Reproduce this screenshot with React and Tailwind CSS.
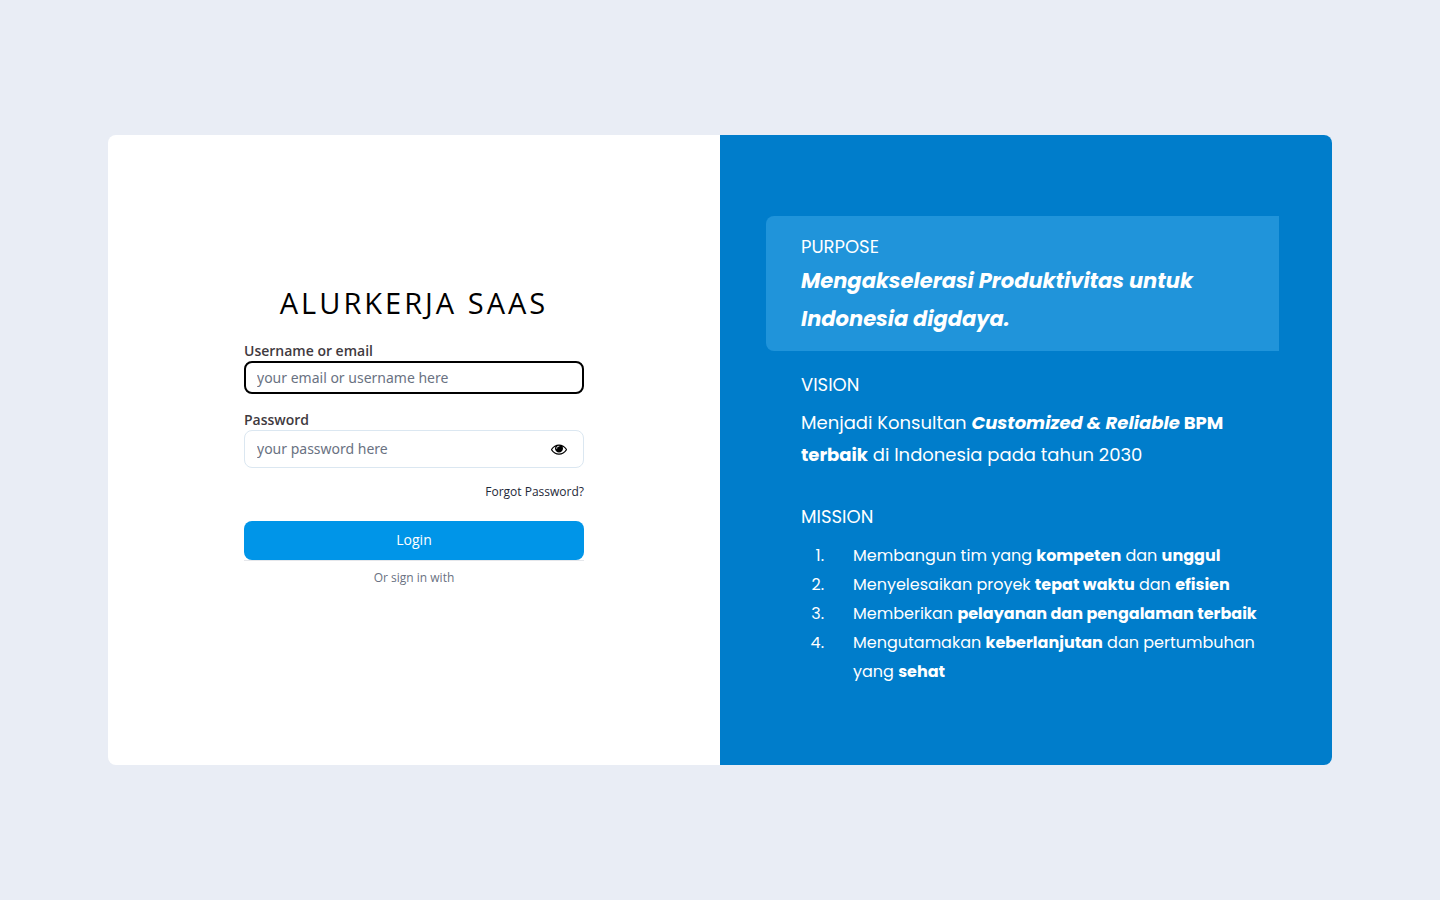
// src/pages/LoginPage.jsx

import React, { useState } from 'react';

function EyeIcon() {
  return (
    <svg viewBox="0 0 1792 1792" className="w-4 h-4" fill="currentColor" aria-hidden="true">
      <path d="M1664 960q-152-236-381-353 61 104 61 225 0 185-131.500 316.500t-316.500 131.500-316.500-131.500-131.500-316.500q0-121 61-225-229 117-381 353 133 205 333.500 326.500t434.500 121.500 434.500-121.500 333.500-326.500zm-720-384q0-20-14-34t-34-14q-125 0-214.500 89.500t-89.500 214.500q0 20 14 34t34 14 34-14 14-34q0-86 61-147t147-61q20 0 34-14t14-34zm848 384q0 34-20 69-140 230-376.500 368.500t-499.500 138.500-499.500-139-376.500-368q-20-35-20-69t20-69q140-229 376.500-368t499.500-139 499.500 139 376.500 368q20 35 20 69z" />
    </svg>
  );
}

const missions = [
  <>Membangun tim yang <b>kompeten</b> dan <b>unggul</b></>,
  <>Menyelesaikan proyek <b>tepat waktu</b> dan <b>efisien</b></>,
  <>Memberikan <b>pelayanan dan pengalaman terbaik</b></>,
  <>Mengutamakan <b>keberlanjutan</b> dan pertumbuhan<br />yang <b>sehat</b></>,
];

function LoginForm() {
  const [username, setUsername] = useState('');
  const [password, setPassword] = useState('');
  const [showPassword, setShowPassword] = useState(false);

  return (
    <form
      onSubmit={e => e.preventDefault()}
      className="w-full max-w-[340px] pb-[30px] flex flex-col text-sm"
    >
      <h1 className="mb-5 text-[29px] leading-9 text-center tracking-[3px] text-black">
        ALURKERJA SAAS
      </h1>
      <label htmlFor="username" className="font-semibold text-[#3f3a40]">
        Username or email
      </label>
      <input
        id="username"
        placeholder="your email or username here"
        value={username}
        onChange={e => setUsername(e.target.value)}
        className="w-full h-[33px] mb-4 px-[11px] border-2 border-black rounded-lg outline-none font-['Noto_Sans',sans-serif] placeholder:text-gray-500"
      />
      <label htmlFor="password" className="font-semibold text-[#3f3a40]">
        Password
      </label>
      <div className="flex items-center h-[38px] pl-3 pr-4 border border-[#dbe7f1] rounded-lg">
        <input
          id="password"
          type={showPassword ? 'text' : 'password'}
          placeholder="your password here"
          value={password}
          onChange={e => setPassword(e.target.value)}
          className="flex-1 min-w-0 outline-none font-['Noto_Sans',sans-serif] placeholder:text-gray-500"
        />
        <button
          type="button"
          aria-label="Show password"
          onClick={() => setShowPassword(!showPassword)}
          className="text-black"
        >
          <EyeIcon />
        </button>
      </div>
      <a href="#forgot" className="self-end mt-4 text-xs text-gray-800">
        Forgot Password?
      </a>
      <button type="submit" className="mt-[21px] h-[39px] rounded-lg bg-[#0095e8] text-white">
        Login
      </button>
      <p className="pt-[9px] border-t border-gray-200 text-xs text-center text-gray-500">
        Or sign in with
      </p>
    </form>
  );
}

export default function App() {
  return (
    <div className="min-h-screen flex items-center justify-center bg-[#e9edf5] font-['Open_Sans',sans-serif]">
      <main className="w-[85%] min-h-[70vh] grid grid-cols-2 rounded-lg overflow-hidden bg-white">
        <div className="flex items-center justify-center">
          <LoginForm />
        </div>
        <div className="flex flex-col justify-center pt-0.5 pl-[46px] pr-[53px] bg-[#007dcb] text-white font-[Poppins,Inter,sans-serif]">
          <section className="pl-[35px] pt-[17px] pb-[13px] rounded-l-lg bg-[#2094da]">
            <h2 className="mb-px text-lg">PURPOSE</h2>
            <p className="text-[21px] leading-[38px] font-bold italic">
              Mengakselerasi Produktivitas untuk
              <br />
              Indonesia digdaya.
            </p>
          </section>
          <section className="pl-[35px] mt-5">
            <h2 className="text-lg">VISION</h2>
            <p className="mt-2 text-lg leading-8">
              Menjadi Konsultan <b><i>Customized &amp; Reliable</i> BPM</b>
              <br />
              <b>terbaik</b> di Indonesia pada tahun 2030
            </p>
          </section>
          <section className="pl-[35px] mt-8">
            <h2 className="text-lg">MISSION</h2>
            <ol className="mt-[10px] text-base leading-[29px]">
              {missions.map((mission, i) => (
                <li key={i} className="flex gap-[29px]">
                  <span className="w-[23px] text-right">{i + 1}.</span>
                  <span className="flex-1">{mission}</span>
                </li>
              ))}
            </ol>
          </section>
        </div>
      </main>
    </div>
  );
}
